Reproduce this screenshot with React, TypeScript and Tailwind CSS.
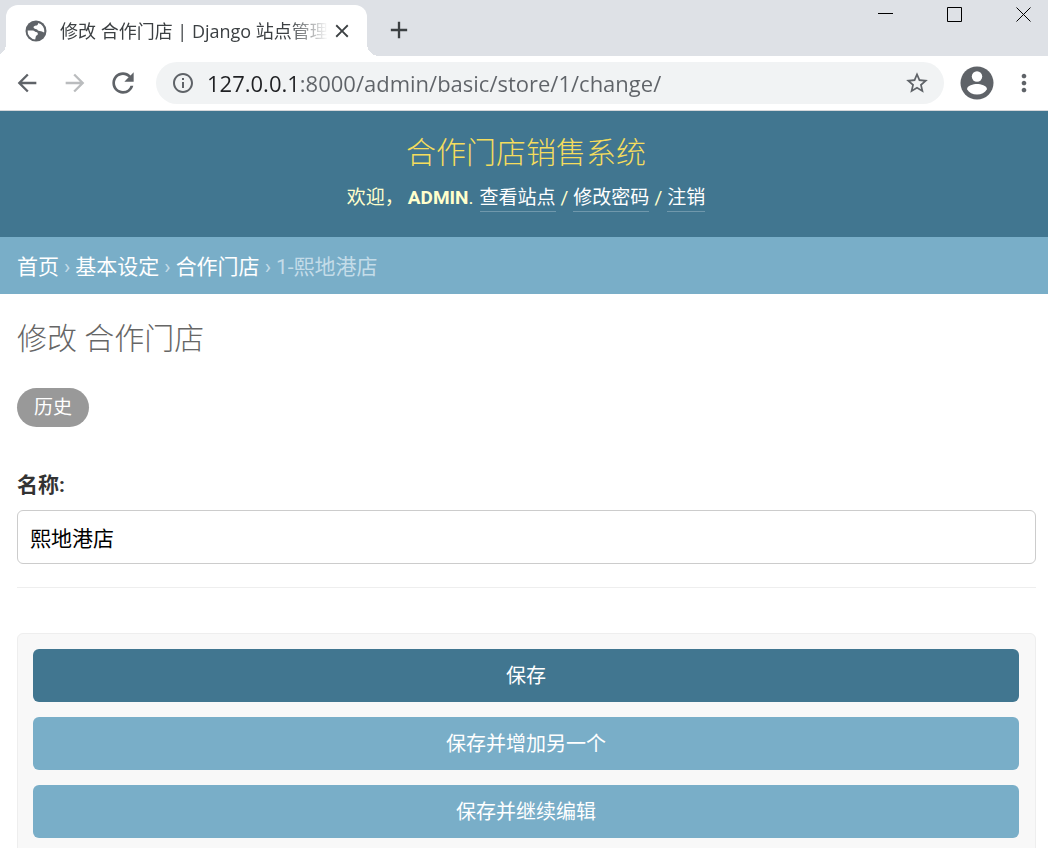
import React, { useState } from "react";
import {
  MdAdd,
  MdArrowBack,
  MdArrowForward,
  MdClose,
  MdInfoOutline,
  MdMoreVert,
  MdRefresh,
  MdStarBorder,
} from "react-icons/md";

const CRUMBS = ["首页", "基本设定", "合作门店"];
const USER_LINKS = ["查看站点", "修改密码", "注销"];

const GlobeIcon = () => (
  <svg viewBox="0 0 22 22" className="h-[22px] w-[22px] shrink-0" aria-hidden="true">
    <circle cx="11" cy="11" r="10.5" fill="#5f6368" />
    <path
      d="M2.6 10.4 H7.6 C9.8 10.4 9.6 11.8 11 12 C12.6 12.2 13 13 12.8 14.2 C12.6 15.4 11.2 15.2 10.8 16.4 L10.2 19.4 A8.4 8.4 0 0 1 2.6 10.4 Z"
      fill="#fff"
    />
    <path
      d="M13.2 2.9 A8.4 8.4 0 0 1 19.3 12.2 C17.8 12.6 17.6 11.2 16 11.2 C14 11.2 13 10.8 12.4 9.8 C11.8 8.6 9.2 9.4 8.6 7.8 C8.2 6.4 9.8 5.8 11 5.6 C12.4 5.4 13.2 4.4 13.2 2.9 Z"
      fill="#fff"
    />
  </svg>
);

const ProfileIcon = () => (
  <svg viewBox="0 0 34 34" className="h-[34px] w-[34px]" aria-hidden="true">
    <circle cx="17" cy="17" r="16.5" fill="#5f6368" />
    <circle cx="17" cy="10.5" r="5.2" fill="#fff" />
    <path
      d="M7 23.2 C7 19.6 13.4 18 17 18 C20.6 18 27 19.6 27 23.2 C25 26.6 21.4 28.6 17 28.6 C12.6 28.6 9 26.6 7 23.2 Z"
      fill="#fff"
    />
  </svg>
);

const WindowControls = () => (
  <div className="flex items-start gap-[54px] pt-[7px] pr-[17px]">
    <button aria-label="最小化" className="h-[15px] w-[15px]">
      <svg viewBox="0 0 15 15" className="h-[15px] w-[15px]">
        <path d="M0 6.5 H15" stroke="#000" fill="none" />
      </svg>
    </button>
    <button aria-label="最大化" className="h-[15px] w-[15px]">
      <svg viewBox="0 0 15 15" className="h-[15px] w-[15px]">
        <path d="M0.5 0.5 H14.5 V14.5 H0.5 Z" stroke="#000" fill="none" />
      </svg>
    </button>
    <button aria-label="关闭" className="h-[15px] w-[15px]">
      <svg viewBox="0 0 15 15" className="h-[15px] w-[15px]">
        <path d="M0.5 0.5 L14.5 14.5 M14.5 0.5 L0.5 14.5" stroke="#000" fill="none" />
      </svg>
    </button>
  </div>
);

const TabStrip = () => (
  <div className="flex h-14 items-stretch bg-[#dee1e6] pl-[6px]">
    <div className="relative mt-[5px] flex w-[361px] items-center rounded-t-xl bg-white pl-[19px]">
      {/* Curved feet of the active tab */}
      <span className="absolute bottom-0 -left-3 h-3 w-3 bg-[radial-gradient(circle_at_0_0,transparent_12px,white_12px)]" />
      <span className="absolute -right-3 bottom-0 h-3 w-3 bg-[radial-gradient(circle_at_100%_0,transparent_12px,white_12px)]" />
      <GlobeIcon />
      <span className="ml-[13px] w-[268px] overflow-hidden font-['Open_Sans','Noto_Sans_CJK_SC',sans-serif] text-lg whitespace-nowrap text-[#3c4043] mask-r-from-85% mask-r-to-100%">
        修改 合作门店 | Django 站点管理
      </span>
      <button aria-label="关闭标签页" className="ml-[3px] text-[#3c4043]">
        <MdClose className="h-[22px] w-[22px]" />
      </button>
    </div>
    <button aria-label="打开新的标签页" className="ml-[18px] pt-1 text-[#3c4043]">
      <MdAdd className="h-7 w-7" />
    </button>
    <div className="flex-1" />
    <WindowControls />
  </div>
);

const Toolbar = () => {
  const [url, setUrl] = useState("127.0.0.1:8000/admin/basic/store/1/change/");

  return (
    <div className="flex h-[55px] items-center border-b border-[#d5d7da] bg-white pr-[10px] pl-[13px] text-[#5f6368]">
      <button aria-label="后退">
        <MdArrowBack className="h-7 w-7" />
      </button>
      <button aria-label="前进" disabled className="ml-5 text-[#babcbe]">
        <MdArrowForward className="h-7 w-7" />
      </button>
      <button aria-label="重新加载" className="ml-[18px]">
        <MdRefresh className="h-8 w-8" />
      </button>
      <div className="ml-[17px] flex h-[42px] flex-1 items-center rounded-full bg-[#f1f3f4] pr-[14px] pl-[15px]">
        <MdInfoOutline className="h-6 w-6 shrink-0" />
        <input
          type="text"
          aria-label="地址"
          value={url}
          onChange={(e) => setUrl(e.target.value)}
          className="ml-3 min-w-0 flex-1 bg-[linear-gradient(90deg,#202124_89px,#5f6368_89px)] bg-clip-text font-['Open_Sans',sans-serif] text-[22px] leading-8 text-transparent outline-none"
        />
        <button aria-label="为此网页添加书签">
          <MdStarBorder className="h-[26px] w-[26px]" />
        </button>
      </div>
      <button aria-label="用户" className="ml-4">
        <ProfileIcon />
      </button>
      <button aria-label="更多" className="ml-4">
        <MdMoreVert className="h-7 w-7" />
      </button>
    </div>
  );
};

const SiteHeader = () => (
  <header className="flex flex-col items-center bg-[#417690] pt-[23px] pb-[25px] pl-1 text-[#ffc]">
    <h1 className="text-3xl leading-[38px] font-light text-[#f5dd5d]">
      合作门店销售系统
    </h1>
    <div className="mt-[13px] flex text-[19px] leading-[26px]">
      <span className="mr-1">欢迎，</span>
      <strong className="mr-[6px] font-bold">
        ADMIN<span className="font-normal">.</span>
      </strong>
      {USER_LINKS.map((label, i) => (
        <React.Fragment key={label}>
          {i > 0 && <span className="mx-[5px]">/</span>}
          <a href="#" className="border-b border-white/25 text-white">
            {label}
          </a>
        </React.Fragment>
      ))}
    </div>
  </header>
);

const Breadcrumbs = () => (
  <nav className="flex gap-[5px] bg-[#79aec8] px-[17px] pt-4 pb-3 text-[21px] leading-[29px] text-[#c4dce8]">
    {CRUMBS.map((label) => (
      <React.Fragment key={label}>
        <a href="#" className="text-white">
          {label}
        </a>
        <span>›</span>
      </React.Fragment>
    ))}
    <span>1-熙地港店</span>
  </nav>
);

const App: React.FC = () => {
  const [name, setName] = useState("熙地港店");

  return (
    <div className="flex h-screen flex-col overflow-hidden bg-white font-['Roboto','Noto_Sans_CJK_SC',sans-serif]">
      <div className="shrink-0">
        <TabStrip />
        <Toolbar />
      </div>

      <div className="min-h-0 flex-1 overflow-hidden">
        <SiteHeader />
        <Breadcrumbs />

        <main className="pt-[23px] pr-3 pl-[17px]">
          <h1 className="text-3xl leading-[44px] font-light text-[#666]">
            修改 合作门店
          </h1>
          <a
            href="#"
            className="mt-[27px] inline-block rounded-full bg-[#999] px-[17px] py-[6px] text-[19px] leading-[27px] text-white"
          >
            历史
          </a>

          <form onSubmit={(e) => e.preventDefault()}>
            <div className="mt-[43px] border-b border-[#eee] pb-[23px]">
              <label
                htmlFor="id_name"
                className="block text-[21px] leading-[30px] font-bold text-[#333]"
              >
                名称:
              </label>
              <input
                id="id_name"
                type="text"
                value={name}
                onChange={(e) => setName(e.target.value)}
                className="mt-[10px] block h-[54px] w-full rounded-md border border-[#ccc] px-3 pb-px text-[21px] text-black"
              />
            </div>

            <div className="mt-[45px] flex flex-col gap-[15px] rounded-md border border-[#eee] bg-[#f8f8f8] py-[15px] pr-4 pl-[15px] text-xl text-white">
              <button type="submit" className="h-[53px] rounded-md bg-[#417690]">
                保存
              </button>
              <button type="submit" className="h-[53px] rounded-md bg-[#79aec8]">
                保存并增加另一个
              </button>
              <button type="submit" className="h-[53px] rounded-md bg-[#79aec8]">
                保存并继续编辑
              </button>
            </div>
          </form>
        </main>
      </div>
    </div>
  );
};

export default App;
